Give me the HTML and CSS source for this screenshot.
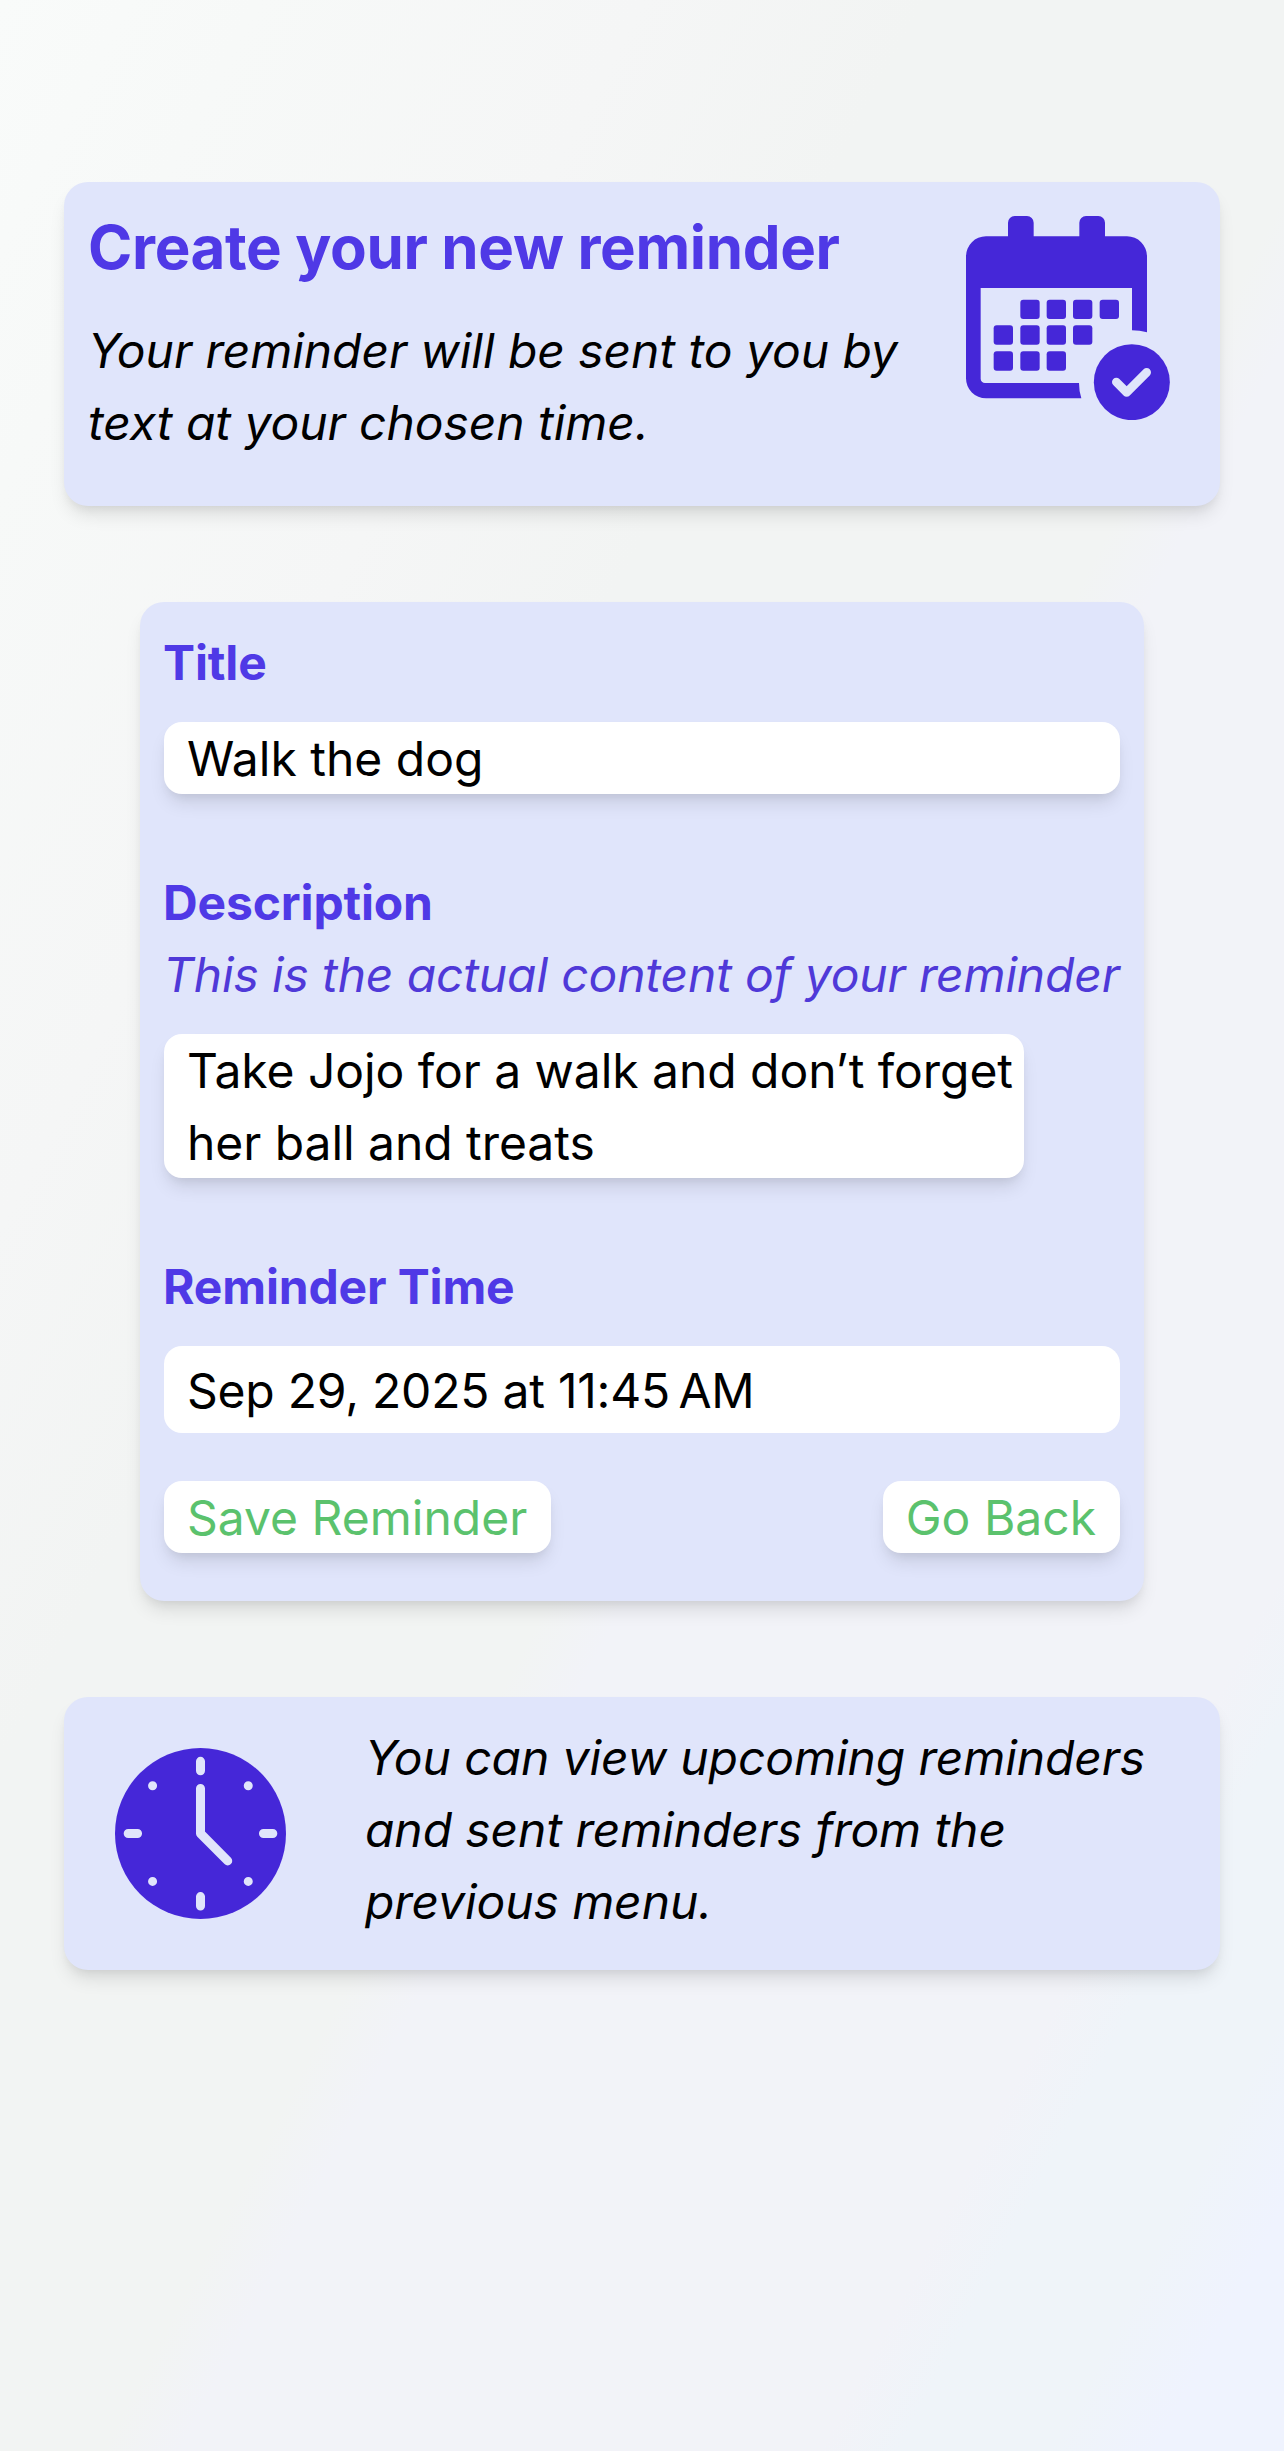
FILE: index.html
```html
<!DOCTYPE html>
<html lang="en">
<head>
<meta charset="utf-8">
<title>Create your new reminder</title>
<link rel="stylesheet" href="styles.css">
</head>
<body>
<main class="page">
  <section class="card intro">
    <div class="intro-text">
      <h1 class="heading">Create your new reminder</h1>
      <p class="note">Your reminder will be sent to you by text at your chosen time.</p>
    </div>
    <svg class="calendar-icon" viewBox="78 78 612 612" aria-hidden="true">
      <path fill-rule="evenodd" d="M204 139V98a20 20 0 0 1 20-20h37a20 20 0 0 1 20 20v41H418V98a20 20 0 0 1 20-20h37a20 20 0 0 1 20 20v41H561a60 60 0 0 1 60 60V427Q599 421 576 421V294H122V566a13 13 0 0 0 13 13H417Q417 603 424 625H138a60 60 0 0 1-60-60V199a60 60 0 0 1 60-60Z"/>
      <g>
        <rect x="241" y="329" width="58" height="58" rx="9"/><rect x="320" y="329" width="58" height="58" rx="9"/><rect x="399" y="329" width="58" height="58" rx="9"/><rect x="479" y="329" width="58" height="58" rx="9"/>
        <rect x="161" y="406" width="58" height="58" rx="9"/><rect x="241" y="406" width="58" height="58" rx="9"/><rect x="320" y="406" width="58" height="58" rx="9"/><rect x="399" y="406" width="58" height="58" rx="9"/>
        <rect x="161" y="484" width="58" height="58" rx="9"/><rect x="241" y="484" width="58" height="58" rx="9"/><rect x="320" y="484" width="58" height="58" rx="9"/>
      </g>
      <circle cx="575.500" cy="576.500" r="114"/>
      <path class="tick" d="M529 576 560 607 620 547"/>
    </svg>
  </section>

  <form class="card form">
    <div class="field">
      <div class="label">Title</div>
      <div class="box raised">Walk the dog</div>
    </div>
    <div class="field">
      <div class="label">Description</div>
      <div class="hint">This is the actual content of your reminder</div>
      <div class="box raised area">Take Jojo for a walk and don’t forget her ball and treats</div>
    </div>
    <div class="field last">
      <div class="label">Reminder Time</div>
      <div class="box date">Sep 29, 2025 at 11:45&#8239;AM</div>
    </div>
    <div class="actions">
      <button class="button raised" type="button">Save Reminder</button>
      <button class="button raised" type="button">Go Back</button>
    </div>
  </form>

  <section class="card info">
    <svg class="clock-icon" viewBox="225.500 204 512 512" aria-hidden="true">
      <circle cx="481.500" cy="460" r="256"/>
      <path class="marks" d="M481.500 244v28M481.500 649v28M265 460h28M670 460h28M481.500 325V460L563 542"/>
      <path class="marks" d="M338 317h.01M624.500 317h.01M338 603.500h.01M624.500 603.500h.01"/>
    </svg>
    <p class="note">You can view upcoming reminders and sent reminders from the previous menu.</p>
  </section>
</main>
</body>
</html>
```

FILE: styles.css
```css
* {
  box-sizing: border-box;
  margin: 0;
}

body {
  min-height: 2451px;
  background: linear-gradient(to bottom right, #f9fbfa, #f7f9f8 10%, #f5f6f6 25%, #f2f4f3 36%, #f2f4f3 54%, #f2f3f8 57%, #f2f3f8 82%, #eff4f9 85%, #eff4f9 91%, #eff3fe 95%);
  color: #000;
  font-family: Inter, "Liberation Sans", sans-serif;
  font-size: 48px;
  line-height: 72px;
}

.page {
  display: flex;
  flex-direction: column;
  align-items: center;
  gap: 96px;
  padding-top: 182px;
}

.card {
  border-radius: 24px;
  background: #e0e5fb;
  box-shadow: 0 12px 18px -3px rgb(0 0 0 / 10%), 0 6px 12px -6px rgb(0 0 0 / 10%);
}

.intro {
  display: flex;
  justify-content: space-between;
  width: 1156px;
  height: 324px;
  padding: 23px 24px 24px;
}

.intro-text {
  display: flex;
  flex-direction: column;
  gap: 26px;
  width: 840px;
}

.heading {
  color: #4f39e6;
  font-size: 60px;
  font-weight: 700;
  letter-spacing: -0.36px;
  line-height: 84px;
}

.note {
  font-style: italic;
  letter-spacing: -0.06px;
}

.calendar-icon {
  width: 204px;
  height: 204px;
  margin: 11px 26px 0 0;
  fill: #4527d8;
}

.tick {
  fill: none;
  stroke: #e0e5fb;
  stroke-width: 26;
  stroke-linecap: round;
  stroke-linejoin: round;
}

.form {
  width: 1004px;
  padding: 25px 24px 48px;
}

.field {
  margin-bottom: 73px;
}

.last {
  margin-bottom: 48px;
}

.label {
  margin-left: -1px;
  color: #4f39e6;
  font-weight: 700;
  letter-spacing: -0.15px;
}

.hint {
  margin-left: -1px;
  color: #4f39d8;
  font-style: italic;
  letter-spacing: -0.16px;
  white-space: nowrap;
}

.box {
  height: 72px;
  margin-top: 23px;
  padding: 1px 0 0 23px;
  border-radius: 18px;
  background: #fff;
}

.raised {
  box-shadow: 0 12px 18px -3px rgb(0 0 0 / 10%), 0 6px 12px -6px rgb(0 0 0 / 10%);
}

.area {
  width: 860px;
  height: 144px;
  letter-spacing: -0.05px;
}

.date {
  height: 87px;
  padding-top: 9px;
  letter-spacing: -0.22px;
}

.actions {
  display: flex;
  justify-content: space-between;
}

.button {
  height: 72px;
  padding: 1px 24px 0 23px;
  border: 0;
  border-radius: 18px;
  background: #fff;
  color: #5bc26d;
  font: inherit;
}

.info {
  display: flex;
  align-items: center;
  width: 1156px;
  height: 273px;
  padding: 0 24px 0 51px;
  gap: 79px;
}

.info .note {
  flex: 1;
  margin-bottom: 7px;
  letter-spacing: -0.1px;
}

.clock-icon {
  flex: none;
  width: 171px;
  height: 171px;
  fill: #4527d8;
}

.marks {
  fill: none;
  stroke: #e0e5fb;
  stroke-width: 27;
  stroke-linecap: round;
  stroke-linejoin: round;
}
```
